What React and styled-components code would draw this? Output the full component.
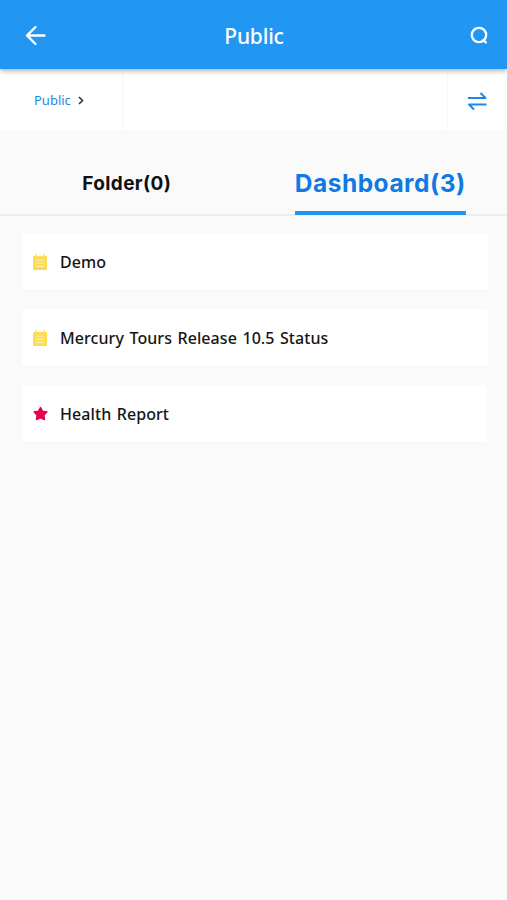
import React from "react";
import styled, { createGlobalStyle } from "styled-components";

const GlobalStyle = createGlobalStyle`
  * {
    box-sizing: border-box;
  }
  body {
    margin: 0;
    background-color: #fafafa;
    font-family: "Noto Sans", "Open Sans", sans-serif;
  }
`;
const Container = styled.div`
  min-height: 100vh;
  background-color: #fafafa;
`;
const Header = styled.header`
  position: relative;
  display: flex;
  align-items: center;
  justify-content: space-between;
  height: 69px;
  padding: 3px 18px 0 24px;
  background-color: #2196f3;
  box-shadow: 0 2px 5px rgba(0, 0, 0, 0.3);
`;
const Title = styled.h1`
  margin: 0 8px 0 0;
  color: white;
  font-size: 21px;
  font-weight: 500;
  line-height: 30px;
  letter-spacing: -0.2px;
`;
const IconButton = styled.button`
  display: flex;
  padding: 0;
  border: none;
  background: none;
  color: ${(props) => props.$color};
  cursor: pointer;
`;
const PathBar = styled.nav`
  display: flex;
  height: 61px;
  background-color: white;
`;
const Crumb = styled.div`
  display: flex;
  align-items: center;
  gap: 7px;
  width: 123px;
  padding: 1px 0 0 34px;
  border-right: 1px solid #f5f5f5;
`;
const CrumbText = styled.span`
  color: #1e88e5;
  font-size: 13px;
`;
const Sort = styled.div`
  display: flex;
  align-items: center;
  justify-content: center;
  width: 60px;
  margin-left: auto;
  padding: 2px 2px 0 0;
  border-left: 1px solid #f8f8f8;
`;
const Tabs = styled.div`
  display: flex;
  height: 86px;
  border-bottom: 2px solid #ececec;
`;
const Tab = styled.div`
  flex: 1;
  display: flex;
  justify-content: center;
`;
const TabLabel = styled.span`
  height: 85px;
  padding-top: ${(props) => (props.$active ? "22px" : "23px")};
  border-bottom: ${(props) => (props.$active ? "4px solid #2196f3" : "none")};
  color: ${(props) => (props.$active ? "#0f7ae5" : "#111")};
  font-family: Inter, sans-serif;
  font-size: ${(props) => (props.$active ? "24.5px" : "19px")};
  font-weight: ${(props) => (props.$active ? "650" : "700")};
  line-height: 62px;
  letter-spacing: ${(props) => (props.$active ? "0.5px" : "0.4px")};
  white-space: nowrap;
`;
const List = styled.div`
  display: flex;
  flex-direction: column;
  gap: 19px;
  padding: 17px 19px 0 22px;
`;
const Item = styled.div`
  display: flex;
  align-items: center;
  gap: 12px;
  height: 57px;
  padding: 1px 0 0 10px;
  margin-right: ${(props) => (props.$inset ? "2px" : "0")};
  border-radius: 3px;
  background-color: white;
  box-shadow: 0 1px 2px rgba(0, 0, 0, 0.02);
`;
const ItemName = styled.span`
  color: #151515;
  font-size: 16px;
  font-weight: 500;
  letter-spacing: 0.08px;
  word-spacing: 1.2px;
`;

const BackIcon = () => (
  <svg width='23' height='22' viewBox='0 0 23 22' fill='none' stroke='currentColor' strokeWidth='2.4' strokeLinecap='round' strokeLinejoin='round'>
    <path d='M20.5 10.5H3M11.5 2L3 10.5l8.5 8.5' />
  </svg>
);
const SearchIcon = () => (
  <svg width='20' height='20' viewBox='0 0 20 20' fill='none' stroke='currentColor' strokeWidth='2.3' strokeLinecap='round'>
    <circle cx='10' cy='9' r='7.2' />
    <path d='M14.4 14l2.4 2.4' />
  </svg>
);
const SwapIcon = () => (
  <svg width='20' height='20' viewBox='0 0 20 20' fill='none' stroke='currentColor' strokeWidth='2' strokeLinejoin='round'>
    <path d='M1 7h17.5L13.5 2M19.5 13.5H2L7 18.5' />
  </svg>
);
const ChevronIcon = () => (
  <svg width='6' height='9' viewBox='0 0 6 9' fill='none' stroke='#333' strokeWidth='1.6'>
    <path d='M1 1l3.5 3.5L1 8' />
  </svg>
);
const NoteIcon = () => (
  <svg width='16' height='18' viewBox='0 0 16 18'>
    <rect x='1' y='3' width='14' height='14' rx='1' fill='#fddc55' />
    <path d='M4 1v3M12 1v3' stroke='#fddc55' strokeWidth='1.4' />
    <path d='M8 1.8v2' stroke='#fde88c' strokeWidth='1.4' />
    <path d='M4 7.2h8M4 10.3h8M4 13.4h8' stroke='#fff0a8' strokeWidth='1.1' />
  </svg>
);
const StarIcon = () => (
  <svg width='16' height='16' viewBox='0 0 16 16'>
    <path
      d='M8.5 1.5l2 3.7 4.5.7-3.1 3.4.6 4.2-4-1.6-4 1.6.6-4.2L2 5.9l4.5-.7z'
      fill='#e6004f'
      stroke='#e6004f'
      strokeWidth='1.4'
      strokeLinejoin='round'
    />
  </svg>
);

const App = () => {
  return (
    <Container>
      <GlobalStyle />
      <Header>
        <IconButton $color='white' aria-label='Back'>
          <BackIcon />
        </IconButton>
        <Title>Public</Title>
        <IconButton $color='white' aria-label='Search'>
          <SearchIcon />
        </IconButton>
      </Header>
      <PathBar>
        <Crumb>
          <CrumbText>Public</CrumbText>
          <ChevronIcon />
        </Crumb>
        <Sort>
          <IconButton $color='#1e88e5' aria-label='Switch'>
            <SwapIcon />
          </IconButton>
        </Sort>
      </PathBar>
      <Tabs>
        <Tab>
          <TabLabel>Folder(0)</TabLabel>
        </Tab>
        <Tab>
          <TabLabel $active>Dashboard(3)</TabLabel>
        </Tab>
      </Tabs>
      <List>
        <Item>
          <NoteIcon />
          <ItemName>Demo</ItemName>
        </Item>
        <Item>
          <NoteIcon />
          <ItemName>Mercury Tours Release 10.5 Status</ItemName>
        </Item>
        <Item $inset>
          <StarIcon />
          <ItemName>Health Report</ItemName>
        </Item>
      </List>
    </Container>
  );
};

export default App;
